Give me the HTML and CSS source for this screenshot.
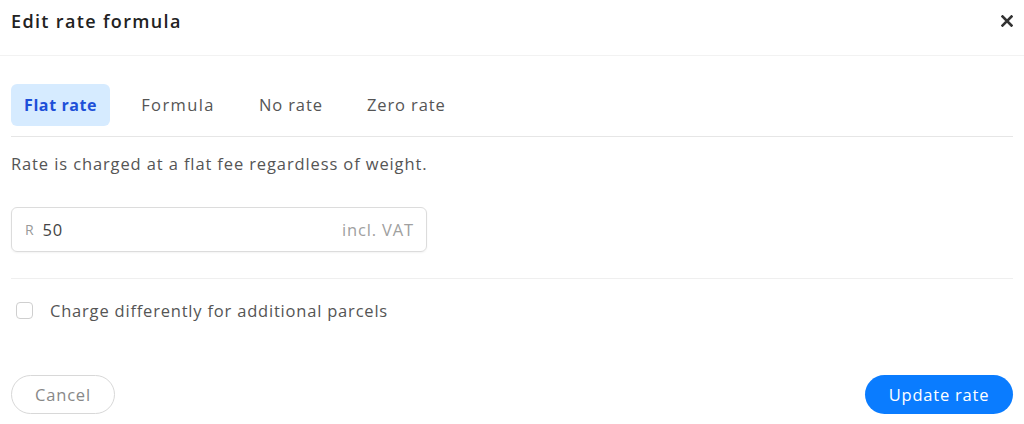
FILE: index.html
```html
<!DOCTYPE html>
<html>
<head>
<meta charset="utf-8">
<link rel="stylesheet" href="styles.css">
</head>
<body>
<div class="modal">
  <header class="header">
    <h1 class="title">Edit rate formula</h1>
    <button class="close" aria-label="Close">
      <svg width="12" height="12" viewBox="0 0 12 12"><path d="M1.5 1.5 L10.5 10.5 M10.5 1.5 L1.5 10.5" stroke="#333" stroke-width="2.6" stroke-linecap="square"/></svg>
    </button>
  </header>
  <div class="body">
    <nav class="tabs">
      <span class="tab active">Flat rate</span>
      <span class="tab">Formula</span>
      <span class="tab">No rate</span>
      <span class="tab">Zero rate</span>
    </nav>
    <p class="desc">Rate is charged at a flat fee regardless of weight.</p>
    <div class="field">
      <span class="prefix">R</span>
      <span class="value">50</span>
      <span class="suffix">incl. VAT</span>
    </div>
    <hr class="divider">
    <label class="check">
      <span class="box"></span>
      <span class="check-label">Charge differently for additional parcels</span>
    </label>
    <div class="actions">
      <button class="btn cancel">Cancel</button>
      <button class="btn primary">Update rate</button>
    </div>
  </div>
</div>
</body>
</html>
```
FILE: styles.css
```css
* { box-sizing: border-box; }
html, body { margin: 0; padding: 0; background: #fff; }
body {
  font-family: "Open Sans", "Liberation Sans", sans-serif;
  color: #444;
  width: 1024px;
  height: 424px;
  overflow: hidden;
}
.modal { display: flex; flex-direction: column; }
.header {
  height: 56px;
  display: flex;
  align-items: center;
  justify-content: space-between;
  padding: 0 11px 0 11px;
  border-bottom: 1px solid #f2f2f2;
}
.title {
  margin: 0 0 14px 0;
  font-size: 18px;
  font-weight: 600;
  color: #222;
  letter-spacing: 1.35px;
}
.close {
  border: 0;
  background: none;
  padding: 0;
  margin: 0 0 14px 0;
  width: 12px;
  height: 12px;
  display: flex;
}
.body { padding: 0 11px; display: flex; flex-direction: column; }
.tabs {
  margin-top: 28px;
  display: flex;
  gap: 18px;
  padding-bottom: 10px;
  border-bottom: 1px solid #e6e6e6;
}
.tab {
  height: 42px;
  display: flex;
  align-items: center;
  padding: 0 13px 1px;
  font-size: 16.5px;
  color: #555;
  border-radius: 6px;
  letter-spacing: 0.9px;
}
.tab:nth-child(2) { letter-spacing: 1.4px; }
.tab.active {
  background: #d6ebff;
  color: #1d4fd8;
  font-weight: 700;
  font-size: 16px;
  letter-spacing: 0.6px;
}
.desc {
  margin: 17px 0 0 0;
  font-size: 16.5px;
  color: #555;
  line-height: 20px;
  letter-spacing: 0.88px;
}
.field {
  margin-top: 33px;
  width: 416px;
  height: 45px;
  border: 1px solid #dcdcdc;
  border-radius: 6px;
  box-shadow: 0 1px 2px rgba(0,0,0,0.05);
  display: flex;
  align-items: center;
  padding: 0 12px 0 13px;
  font-size: 16.5px;
  letter-spacing: 0.85px;
}
.prefix { color: #999; font-size: 14px; margin-right: 8px; }
.value { color: #444; flex: 1; }
.suffix { color: #a0a0a0; }
.divider {
  margin: 26px 0 0 0;
  border: 0;
  border-top: 1px solid #efefef;
  height: 0;
}
.check {
  margin-top: 22px;
  display: flex;
  align-items: center;
  height: 18px;
}
.box {
  width: 17px;
  height: 17px;
  border: 1px solid #cfcfcf;
  border-radius: 4px;
  margin-left: 5px;
  margin-right: 17px;
}
.check-label {
  font-size: 16.5px;
  color: #555;
  letter-spacing: 0.8px;
}
.actions {
  margin-top: 56px;
  display: flex;
  justify-content: space-between;
}
.btn {
  height: 39px;
  border-radius: 20px;
  font-family: inherit;
  font-size: 16.5px;
  letter-spacing: 0.8px;
  cursor: pointer;
}
.cancel {
  width: 104px;
  background: #fff;
  border: 1px solid #d8d8d8;
  color: #888;
}
.primary {
  width: 148px;
  background: #0a7cff;
  border: 0;
  color: #fff;
}
```
